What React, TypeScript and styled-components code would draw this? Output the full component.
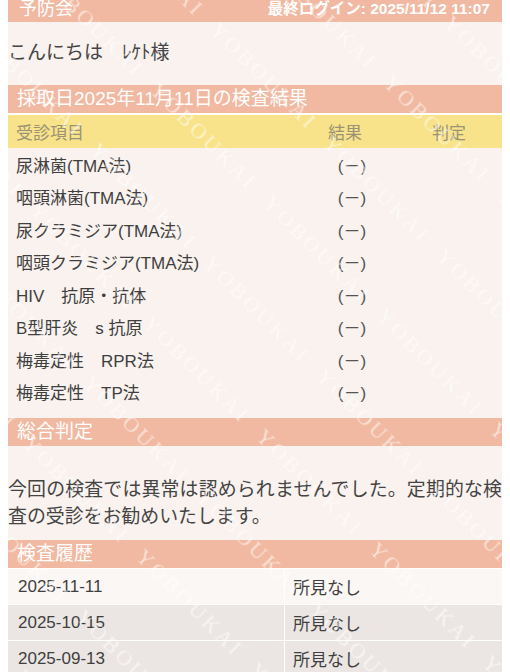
import React from "react";
import styled, { createGlobalStyle } from "styled-components";

const GlobalStyle = createGlobalStyle`
  body {
    margin: 0 8px;
    background: #ffffff;
    font-family: "Liberation Sans", "Noto Sans CJK JP", sans-serif;
    color: #444444;
  }
`;

const Page = styled.div`
  position: relative;
  background: #f9f2ee;
  overflow: hidden;
`;

const TopBar = styled.header`
  display: flex;
  justify-content: space-between;
  align-items: flex-start;
  height: 22px;
  padding: 0 12px 0 11px;
  background: #f1b9a1;
  color: #ffffff;
`;

const Brand = styled.span`
  font-size: 18px;
  line-height: 18px;
`;

const LastLogin = styled.span`
  font-size: 15.5px;
  line-height: 18px;
  font-weight: bold;
`;

const Greeting = styled.p`
  margin: 0;
  padding: 16px 0 18px;
  font-size: 19px;
  line-height: 29px;
`;

const SectionTitle = styled.h2`
  margin: 0;
  padding: 0 9px;
  background: #f1b9a1;
  color: #ffffff;
  font-size: 19px;
  font-weight: normal;
  line-height: 28px;
`;

const ResultTable = styled.div`
  border-top: 2px solid #ffffff;
  margin-bottom: 10px;
`;

const HeadRow = styled.div`
  display: grid;
  grid-template-columns: 1fr 104px 100px;
  align-items: center;
  height: 33px;
  background: #f8e38a;
  color: #9a9276;
  font-size: 17px;
`;

const HeadCell = styled.div<{ $center?: boolean; $shift?: number }>`
  padding-left: ${(p) => (p.$center ? 0 : 8)}px;
  padding-right: ${(p) => p.$shift ?? 0}px;
  text-align: ${(p) => (p.$center ? "center" : "left")};
`;

const Row = styled.div`
  display: grid;
  grid-template-columns: 1fr 104px 100px;
  align-items: center;
  height: 32.5px;
  font-size: 17px;
  color: #3f3f3f;
`;

const ItemCell = styled.div`
  padding-left: 8px;
  white-space: pre;
`;

const ResultCell = styled.div`
  text-align: center;
  color: #555555;
  padding-left: 4px;
`;

const Summary = styled.p`
  margin: 0;
  padding: 30px 0 10px 0;
  font-size: 18.9px;
  line-height: 27px;
  text-align: justify;
`;

const HistoryRow = styled.div<{ $shade: boolean }>`
  display: grid;
  grid-template-columns: 276px 1fr;
  box-sizing: border-box;
  height: 36px;
  border-top: 1px solid #ffffff;
  background: ${(p) => (p.$shade ? "#ebe6e3" : "#fbf7f4")};
  font-size: 17px;
  color: #3f3f3f;
`;

const HistoryCell = styled.div<{ $divider?: boolean }>`
  display: flex;
  align-items: center;
  padding-left: ${(p) => (p.$divider ? 8 : 10)}px;
  border-left: ${(p) => (p.$divider ? "1px solid #ffffff" : "none")};
`;

const Watermark = styled.svg`
  position: absolute;
  inset: 0;
  width: 100%;
  height: 100%;
  pointer-events: none;
`;

const items = [
  "尿淋菌(TMA法)",
  "咽頭淋菌(TMA法)",
  "尿クラミジア(TMA法)",
  "咽頭クラミジア(TMA法)",
  "HIV　抗原・抗体",
  "B型肝炎　s 抗原",
  "梅毒定性　RPR法",
  "梅毒定性　TP法",
];

const history = [
  { date: "2025-11-11", result: "所見なし" },
  { date: "2025-10-15", result: "所見なし" },
  { date: "2025-09-13", result: "所見なし" },
];

export default function App() {
  return (
    <>
      <GlobalStyle />
      <Page>
        <TopBar>
          <Brand>予防会</Brand>
          <LastLogin>最終ログイン: 2025/11/12 11:07</LastLogin>
        </TopBar>
        <Greeting>こんにちは　ﾚｹﾄ様</Greeting>
        <SectionTitle>採取日2025年11月11日の検査結果</SectionTitle>
        <ResultTable>
          <HeadRow>
            <HeadCell>受診項目</HeadCell>
            <HeadCell $center $shift={10}>結果</HeadCell>
            <HeadCell $center $shift={6}>判定</HeadCell>
          </HeadRow>
          {items.map((it) => (
            <Row key={it}>
              <ItemCell>{it}</ItemCell>
              <ResultCell>(－)</ResultCell>
              <div />
            </Row>
          ))}
        </ResultTable>
        <SectionTitle>総合判定</SectionTitle>
        <Summary>
          今回の検査では異常は認められませんでした。定期的な検査の受診をお勧めいたします。
        </Summary>
        <SectionTitle>検査履歴</SectionTitle>
        {history.map((h, i) => (
          <HistoryRow key={h.date} $shade={i > 0}>
            <HistoryCell>{h.date}</HistoryCell>
            <HistoryCell $divider>{h.result}</HistoryCell>
          </HistoryRow>
        ))}
        <Watermark aria-hidden="true">
          <defs>
            <pattern
              id="wm"
              patternUnits="userSpaceOnUse"
              width="160"
              height="85"
              patternTransform="rotate(45)"
            >
              <text
                x="4"
                y="50"
                fontFamily="Liberation Serif, serif"
                fontSize="22"
                letterSpacing="3"
                fill="#ffffff"
                fillOpacity="0.55"
              >
                YOBOUKAI
              </text>
            </pattern>
          </defs>
          <rect width="100%" height="100%" fill="url(#wm)" />
        </Watermark>
      </Page>
    </>
  );
}
